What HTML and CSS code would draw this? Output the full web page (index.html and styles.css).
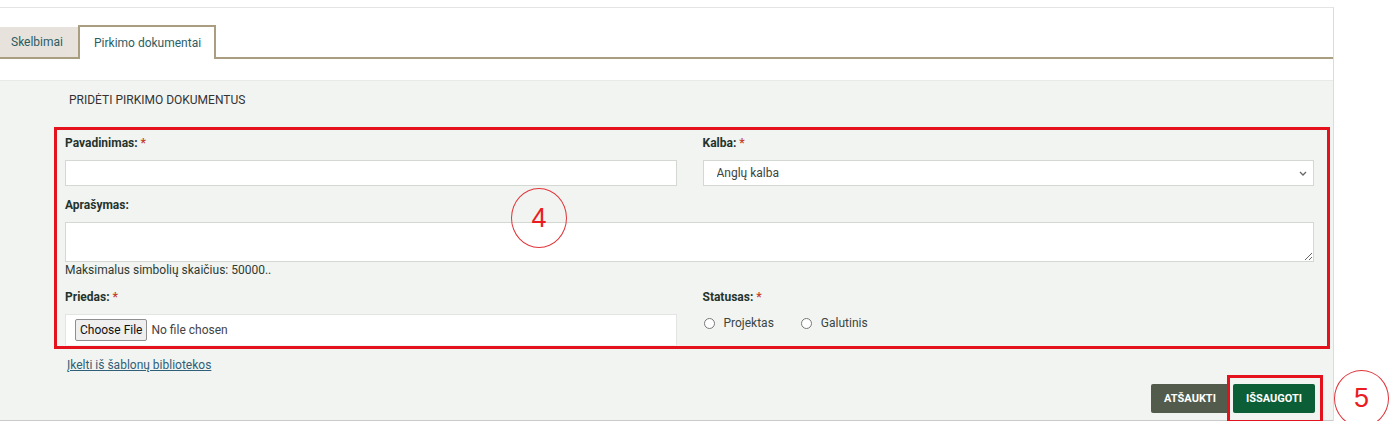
FILE: index.html
```html
<!DOCTYPE html>
<html lang="lt">
<head>
    <meta charset="UTF-8">
    <meta name="viewport" content="width=device-width, initial-scale=1.0">
    <title>Pirkimo dokumentai</title>
    <link rel="stylesheet" href="styles.css">
</head>
<body>
    <div class="page">
        <div class="tabs">
            <a class="tab" href="#">Skelbimai</a>
            <a class="tab active" href="#">Pirkimo dokumentai</a>
        </div>

        <section class="panel">
            <h2 class="panel-title">PRIDĖTI PIRKIMO DOKUMENTUS</h2>

            <div class="form-box">
                <div class="form-grid">
                    <div class="field">
                        <label for="title">Pavadinimas: <span class="req">*</span></label>
                        <input type="text" id="title" class="control">
                    </div>
                    <div class="field">
                        <label for="lang">Kalba: <span class="req">*</span></label>
                        <select id="lang" class="control">
                            <option>Anglų kalba</option>
                            <option>Lietuvių kalba</option>
                        </select>
                    </div>
                    <div class="field wide">
                        <label for="desc">Aprašymas:</label>
                        <textarea id="desc" class="control"></textarea>
                        <p class="hint">Maksimalus simbolių skaičius: 50000..</p>
                    </div>
                    <div class="field">
                        <label for="file">Priedas: <span class="req">*</span></label>
                        <div class="file-box">
                            <input type="file" id="file">
                        </div>
                    </div>
                    <div class="field">
                        <label>Statusas: <span class="req">*</span></label>
                        <div class="radios">
                            <label class="radio"><input type="radio" name="status" value="projektas"> Projektas</label>
                            <label class="radio"><input type="radio" name="status" value="galutinis"> Galutinis</label>
                        </div>
                    </div>
                </div>
                <span class="marker marker-4">4</span>
            </div>

            <a class="template-link" href="#">Įkelti iš šablonų bibliotekos</a>

            <div class="actions">
                <button class="btn btn-cancel">ATŠAUKTI</button>
                <button class="btn btn-save">IŠSAUGOTI</button>
            </div>
        </section>

        <span class="marker marker-5">5</span>
    </div>
</body>
</html>
```

FILE: styles.css
```css
body {
    margin: 0;
    font-family: Roboto, "Liberation Sans", Arial, sans-serif;
    font-size: 12px;
    color: #2d3a33;
    background: #fff;
}

.page {
    position: relative;
    width: 1333px;
    margin-top: 7px;
    border-top: 1px solid #e4e4e4;
    border-right: 1px solid #dcdcdc;
}

/* tabs */
.tabs {
    display: flex;
    align-items: flex-end;
    padding-top: 17px;
    border-bottom: 2px solid #aa9e80;
}
.tab {
    display: block;
    color: #2b5e64;
    text-decoration: none;
    line-height: 30px;
    height: 30px;
    padding: 0 15px 0 11px;
    background-color: #e7e3dc;
}
.tab.active {
    background-color: #fff;
    height: 32px;
    line-height: 32px;
    padding: 0 13px 0 14px;
    border: 2px solid #aa9e80;
    border-bottom: none;
    margin-bottom: -2px;
}

/* panel */
.panel {
    margin-top: 21px;
    padding: 11px 18px 7px 0;
    background-color: #f2f4f1;
    border-top: 1px solid #e8eae6;
    border-bottom: 1px solid #cacaca;
}
.panel-title {
    margin: 0 0 19px 69px;
    font-size: 12px;
    font-weight: normal;
    line-height: 16px;
    color: #333;
}

.form-box {
    position: relative;
    margin: 0 -15px 0 54px;
    padding: 5px 13px 1px 8px;
    border: 3px solid #e3121c;
}
.form-grid {
    display: grid;
    grid-template-columns: 1fr 1fr;
    column-gap: 26px;
    row-gap: 11px;
}
.field.wide {
    grid-column: 1 / 3;
}
.field > label {
    display: block;
    font-weight: bold;
    line-height: 16px;
    margin-bottom: 9px;
    color: #24332c;
}
.req {
    color: #c2412b;
}
.control {
    display: block;
    box-sizing: border-box;
    width: 100%;
    height: 26px;
    margin: 0;
    border: 1px solid #d3d8d3;
    border-radius: 0;
    background: #fff;
    font-family: inherit;
    font-size: 12px;
    color: #3b4540;
}
select.control {
    appearance: none;
    padding: 0 24px 0 13px;
    background: #fff url("data:image/svg+xml,%3Csvg xmlns='http://www.w3.org/2000/svg' width='8' height='5' viewBox='0 0 8 5'%3E%3Cpath d='M1 1l3 3 3-3' fill='none' stroke='%23666' stroke-width='1.3'/%3E%3C/svg%3E") no-repeat right 6px center;
}
textarea.control {
    height: 40px;
    resize: vertical;
}
.hint {
    margin: 0;
    line-height: 16px;
    color: #2d3a33;
}

.file-box {
    box-sizing: border-box;
    height: 31px;
    padding: 4px 9px;
    background: #fff;
    border: 1px solid #e2e5e2;
    border-bottom: none;
}
.file-box input {
    font-family: inherit;
    font-size: 12px;
    color: #444;
}
.file-box input::file-selector-button {
    font-family: inherit;
    font-size: 12px;
    height: 22px;
    padding: 0 4px;
    margin-right: 4px;
    background: #efefef;
    border: 1px solid #8f8f8f;
    border-radius: 2px;
    color: #111;
}

.radios {
    display: flex;
    gap: 27px;
    padding-left: 1px;
}
.radio {
    display: flex;
    align-items: center;
    gap: 9px;
    color: #3b4540;
    line-height: 18px;
}
.radio input {
    margin: 0;
    width: 11px;
    height: 11px;
    accent-color: #9a9a9a;
}

.template-link {
    display: inline-block;
    margin: 8px 0 0 67px;
    line-height: 16px;
    color: #2f5f78;
    text-decoration: underline;
}

.actions {
    display: flex;
    justify-content: flex-end;
    gap: 4px;
    margin-top: 11px;
}
.btn {
    height: 29px;
    border: none;
    border-radius: 2px;
    color: #fff;
    font-family: inherit;
    font-size: 11px;
    font-weight: bold;
    cursor: pointer;
}
.btn-cancel {
    width: 78px;
    background-color: #535c4c;
}
.btn-save {
    position: relative;
    width: 82px;
    background-color: #0c5e36;
}
/* highlight frame round the save button */
.btn-save::after {
    content: "";
    position: absolute;
    top: -9px;
    right: -8px;
    bottom: -10px;
    left: -6px;
    border: 3px solid #e3121c;
}

/* numbered step markers */
.marker {
    position: absolute;
    display: flex;
    align-items: center;
    justify-content: center;
    box-sizing: border-box;
    border: 1px solid #e0353a;
    border-radius: 50%;
    color: #ea1c22;
    font-family: "Liberation Sans", Arial, sans-serif;
    font-size: 27px;
}
.marker-4 {
    left: 454px;
    top: 58px;
    width: 56px;
    height: 60px;
}
.marker-5 {
    left: 1334px;
    top: 362px;
    width: 55px;
    height: 57px;
}
```
